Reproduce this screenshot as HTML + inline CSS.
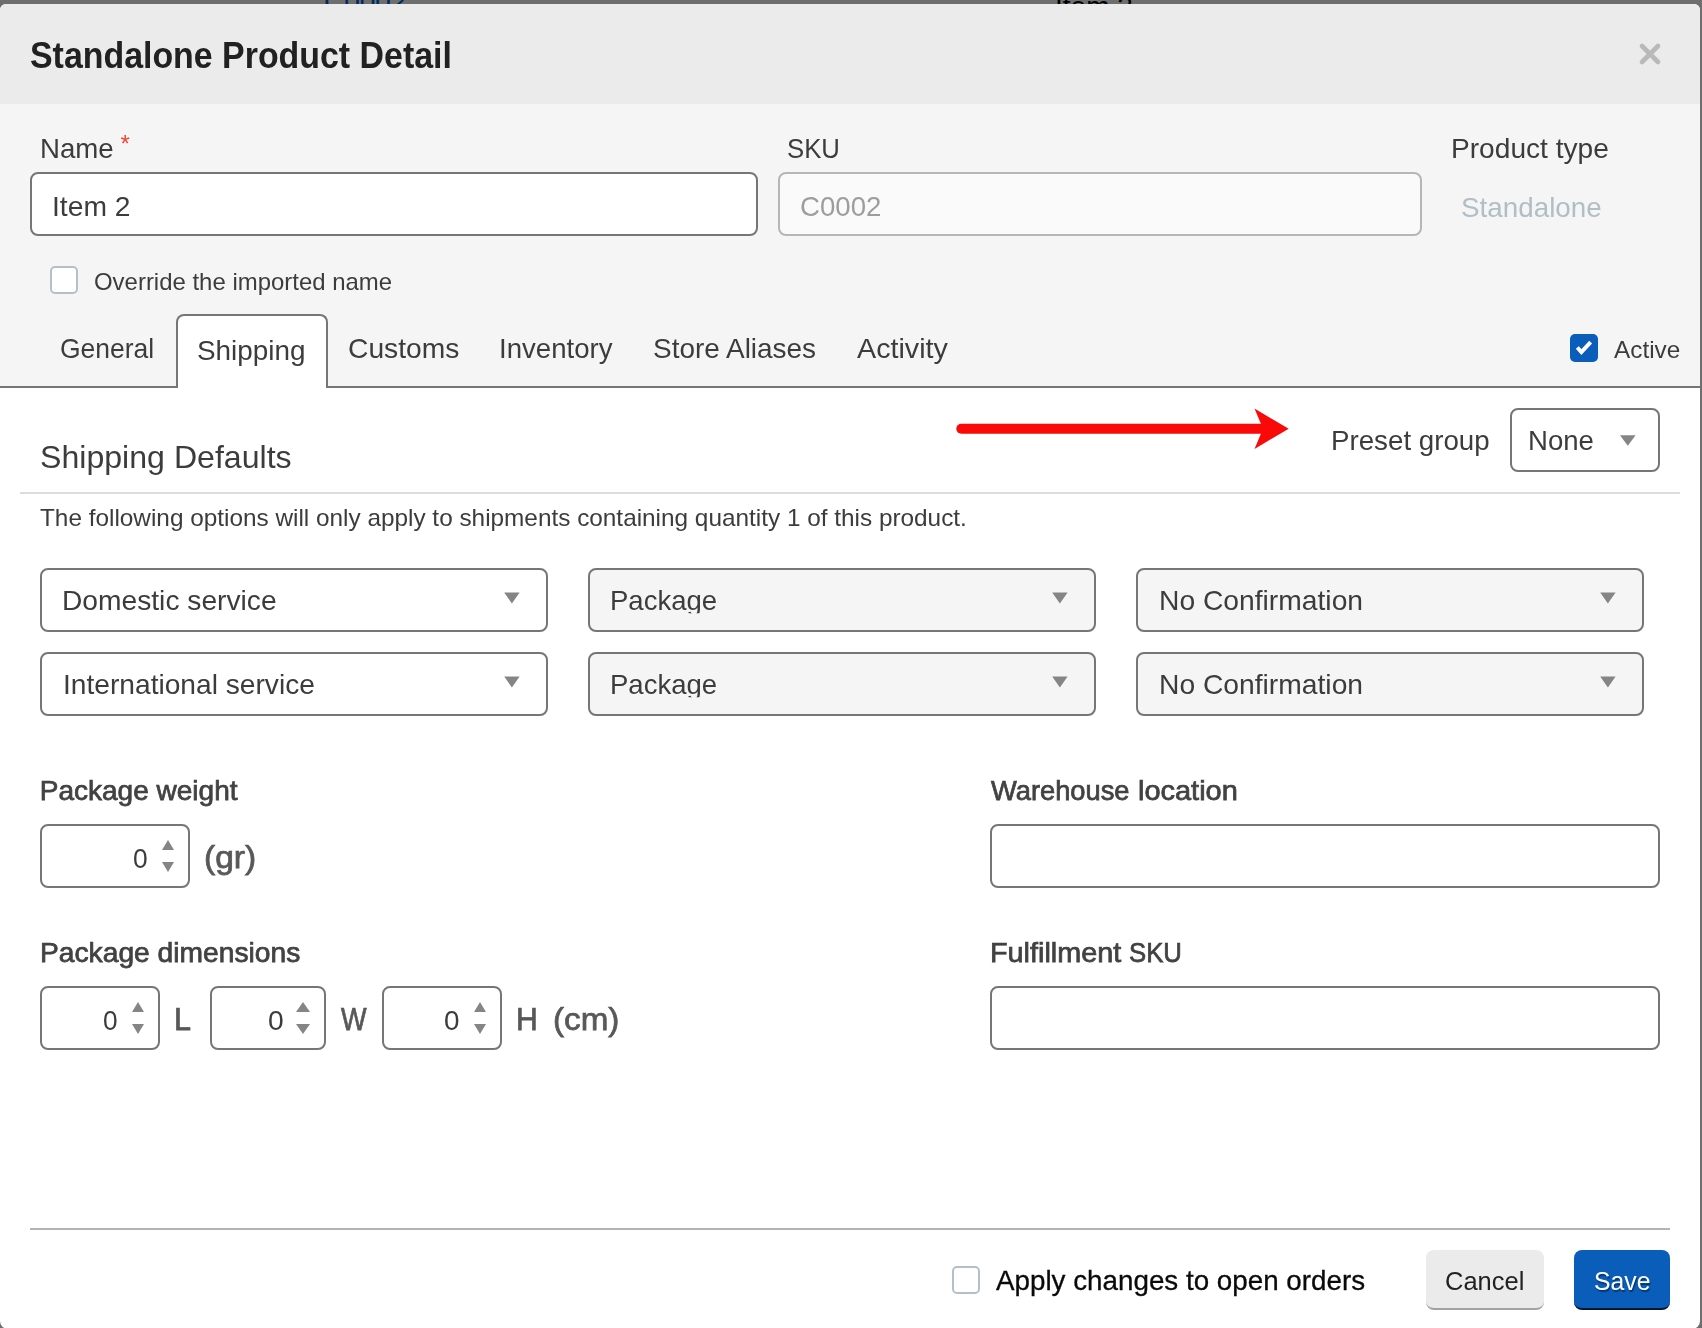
<!DOCTYPE html>
<html lang="en">
<head>
<meta charset="utf-8">
<title>Standalone Product Detail</title>
<style>
*{box-sizing:border-box;margin:0;padding:0}
html,body{width:1702px;height:1328px;overflow:hidden;background:#6e6e6e;font-family:"Liberation Sans",sans-serif;color:#3c3c3c}
.abs,.t,.sel,.inp,.cb{position:absolute}
.t{white-space:nowrap;line-height:1;font-size:28px;transform-origin:0 50%}
.m{-webkit-text-stroke:0.75px currentColor;color:#424242}
.u{color:#585858}
#backdrop{left:0;top:0;width:1702px;height:4px;overflow:hidden;background:#6e6e6e}
#modal{left:0;top:4px;width:1700px;height:1324.6px;background:#fff;border-radius:6px 6px 8px 8px;overflow:hidden;will-change:transform}
#hdr{left:0;top:0;width:1700px;height:100px;background:#ebebeb}
#top{left:0;top:100px;width:1700px;height:284px;background:#f5f5f5}
#tabline{left:0;top:382px;width:1700px;height:2px;background:#767676}
.inp{border:2px solid #767676;border-radius:8px;background:#fff}
.sel{border:2px solid #767676;border-radius:8px;background:#fff;height:64px;width:508px}
.sel.g{background:#f5f5f5}
.cb{width:28px;height:28px;border:2px solid #b4c0c8;border-radius:5px;background:#fff}
.hr{position:absolute;height:2px}
</style>
</head>
<body>
<div id="backdrop" class="abs">
  <span class="t" style="left:324px;top:-12px;font-size:28px;color:#002a5c">C0002</span>
  <span class="t" style="left:1055px;top:-7px;font-size:28px;color:#000">Item 2</span>
</div>
<div id="modal" class="abs">
  <div id="hdr" class="abs"></div>
  <div id="top" class="abs"></div>
  <!-- header -->
  <h1 id="title" class="t" style="left:30px;top:34px;font-size:36px;font-weight:bold;color:#212121;transform:scaleX(0.9415)">Standalone Product Detail</h1>
  <svg id="closex" class="abs" style="left:1638px;top:38px" width="24" height="24" viewBox="0 0 24 24"><path d="M4 4 L20 20 M20 4 L4 20" stroke="#b9b9b9" stroke-width="4.6" stroke-linecap="round" fill="none"/></svg>

  <!-- top form -->
  <label id="lname" class="t" style="left:40.4px;top:131px;transform:scaleX(0.9872)">Name</label>
  <span id="star" class="t" style="left:120.5px;top:128px;font-size:24px;color:#f4432c">*</span>
  <div id="iname" class="inp" style="left:30px;top:168px;width:728px;height:64px"></div>
  <span id="vname" class="t" style="left:51.6px;top:189px;transform:scaleX(1.0085)">Item 2</span>

  <label id="lsku" class="t" style="left:786.8px;top:131px;transform:scaleX(0.9192)">SKU</label>
  <div id="isku" class="inp" style="left:778px;top:168px;width:644px;height:64px;border-color:#b6b6b6;background:#fafafa"></div>
  <span id="vsku" class="t" style="left:799.9px;top:189px;color:#9d9d9d;transform:scaleX(0.9863)">C0002</span>

  <label id="lptype" class="t" style="left:1450.5px;top:131px;transform:scaleX(1.0039)">Product type</label>
  <span id="vptype" class="t" style="left:1460.9px;top:190px;color:#b0bec5;transform:scaleX(0.9933)">Standalone</span>

  <div id="cb1" class="cb" style="left:50px;top:262px"></div>
  <label id="lover" class="t" style="left:93.9px;top:266px;font-size:24px;transform:scaleX(0.9975)">Override the imported name</label>

  <!-- tabs -->
  <div id="tabline" class="abs"></div>
  <div id="tabact" class="abs" style="left:176px;top:310px;width:152px;height:74px;background:#fff;border:2px solid #767676;border-bottom:0;border-radius:8px 8px 0 0"></div>
  <span id="tab1" class="t" style="left:60.4px;top:331px;transform:scaleX(0.9455)">General</span>
  <span id="tab2" class="t" style="left:197.2px;top:333px;transform:scaleX(0.9962)">Shipping</span>
  <span id="tab3" class="t" style="left:348px;top:331px;transform:scaleX(1.0078)">Customs</span>
  <span id="tab4" class="t" style="left:499.4px;top:331px;transform:scaleX(0.9851)">Inventory</span>
  <span id="tab5" class="t" style="left:653.2px;top:331px;transform:scaleX(0.998)">Store Aliases</span>
  <span id="tab6" class="t" style="left:857px;top:331px;transform:scaleX(1.0247)">Activity</span>

  <div id="cbact" class="abs" style="left:1570px;top:330px;width:28px;height:28px;border-radius:5px;background:#0a5eba"></div>
  <svg class="abs" style="left:1570px;top:330px" width="28" height="28" viewBox="0 0 28 28"><path d="M7.3 13.5 L11.4 18 L20.65 8.15" stroke="#fff" stroke-width="4" fill="none" stroke-linecap="butt" stroke-linejoin="miter"/></svg>
  <label id="lact" class="t" style="left:1614px;top:334px;font-size:24px;transform:scaleX(1.0139)">Active</label>

  <!-- body -->
  <h2 id="shipdef" class="t" style="left:39.7px;top:437px;font-size:32px;font-weight:normal;transform:scaleX(1.0033)">Shipping Defaults</h2>
  <svg id="arrow" class="abs" style="left:950px;top:400px" width="345" height="50" viewBox="0 0 345 50"><path d="M11.3 24.75 L315 24.75" stroke="#fa0909" stroke-width="10" stroke-linecap="round" fill="none"/><path d="M338.7 24.75 L304.5 4.6 L313 24.75 L304.5 44.9 Z" fill="#fa0909"/></svg>
  <label id="lpreset" class="t" style="left:1330.5px;top:423px;transform:scaleX(0.9896)">Preset group</label>
  <div id="spreset" class="sel" style="left:1510px;top:404px;width:150px"></div>
  <span id="vpreset" class="t" style="left:1527.8px;top:423px;transform:scaleX(0.9846)">None</span>

  <div class="hr" style="left:20px;top:488px;width:1660px;background:#dcdcdc"></div>
  <p id="note" class="t" style="left:40px;top:502px;font-size:24px;transform:scaleX(1.0142)">The following options will only apply to shipments containing quantity 1 of this product.</p>

  <div class="sel" style="left:40px;top:564px"></div>
  <span id="s11" class="t" style="left:61.8px;top:583px;transform:scaleX(1.0068)">Domestic service</span>
  <div class="sel g" style="left:588px;top:564px"></div>
  <span id="s12" class="t" style="left:609.8px;top:583px;transform:scaleX(0.9834);clip-path:inset(-5px 0 1.7px 0)">Package</span>
  <div class="sel g" style="left:1136px;top:564px"></div>
  <span id="s13" class="t" style="left:1158.5px;top:583px;transform:scaleX(1.0086)">No Confirmation</span>

  <div class="sel" style="left:40px;top:648px"></div>
  <span id="s21" class="t" style="left:62.5px;top:667px;transform:scaleX(1.0054)">International service</span>
  <div class="sel g" style="left:588px;top:648px"></div>
  <span id="s22" class="t" style="left:609.8px;top:667px;transform:scaleX(0.9834);clip-path:inset(-5px 0 1.7px 0)">Package</span>
  <div class="sel g" style="left:1136px;top:648px"></div>
  <span id="s23" class="t" style="left:1158.5px;top:667px;transform:scaleX(1.0086)">No Confirmation</span>

  <!-- weight -->
  <label id="lpw" class="t m" style="left:39.8px;top:773px;transform:scaleX(1)">Package weight</label>
  <div class="inp" style="left:40px;top:820px;width:150px;height:64px"></div>
  <span id="vw" class="t" style="left:132.5px;top:841px;transform:scaleX(0.941)">0</span>
  <span id="ugr" class="t m u" style="left:204px;top:837px;font-size:32px;transform:scaleX(1.0488)">(gr)</span>

  <label id="lpd" class="t m" style="left:39.5px;top:935px;transform:scaleX(1.0072)">Package dimensions</label>
  <div class="inp" style="left:40px;top:982px;width:120px;height:64px"></div>
  <span id="vl" class="t" style="left:103px;top:1003px;transform:scaleX(0.9366)">0</span>
  <span id="uL" class="t m u" style="left:173.5px;top:999px;font-size:32px;transform:scaleX(0.9569)">L</span>
  <div class="inp" style="left:210px;top:982px;width:116px;height:64px"></div>
  <span id="vw2" class="t" style="left:267.9px;top:1003px;transform:scaleX(1.008)">0</span>
  <span id="uW" class="t m u" style="left:340.5px;top:999px;font-size:32px;transform:scaleX(0.846)">W</span>
  <div class="inp" style="left:382px;top:982px;width:120px;height:64px"></div>
  <span id="vh" class="t" style="left:443.9px;top:1003px;transform:scaleX(0.9945)">0</span>
  <span id="uH" class="t m u" style="left:515.9px;top:999px;font-size:32px;transform:scaleX(0.941)">H</span>
  <span id="ucm" class="t m u" style="left:552.5px;top:999px;font-size:32px;transform:scaleX(1.0381)">(cm)</span>

  <label id="lwh" class="t m" style="left:990.9px;top:773px;transform:scaleX(0.9745)">Warehouse</label> <label id="lwh2" class="t m" style="left:1138px;top:773px;transform:scaleX(1.034)">location</label>
  <div class="inp" style="left:990px;top:820px;width:670px;height:64px"></div>
  <label id="lfs" class="t m" style="left:990px;top:935px;transform:scaleX(1.0286)">Fulfillment</label> <label id="lfs2" class="t m" style="left:1129px;top:935px;transform:scaleX(0.9193)">SKU</label>
  <div class="inp" style="left:990px;top:982px;width:670px;height:64px"></div>

  <svg id="tris" class="abs" style="left:0;top:0" width="1700" height="1324" viewBox="0 0 1700 1324" fill="#858585"><polygon points="1620,431.2 1635.6,431.2 1627.8,441.8"/><polygon points="504.2,588.5 519.6,588.5 511.9,599.5"/><polygon points="1052.2,588.5 1067.6,588.5 1059.9,599.5"/><polygon points="1600.2,588.5 1615.6,588.5 1607.9,599.5"/><polygon points="504.2,672.5 519.6,672.5 511.9,683.5"/><polygon points="1052.2,672.5 1067.6,672.5 1059.9,683.5"/><polygon points="1600.2,672.5 1615.6,672.5 1607.9,683.5"/><polygon points="162,846 174,846 168.0,836"/><polygon points="162,858 174,858 168.0,868"/><polygon points="132,1008 144,1008 138.0,998"/><polygon points="132,1020 144,1020 138.0,1030"/><polygon points="296,1008 310,1008 303,998"/><polygon points="296,1020 310,1020 303,1030"/><polygon points="474,1008 486,1008 480.0,998"/><polygon points="474,1020 486,1020 480.0,1030"/></svg>
  <!-- footer -->
  <div class="hr" style="left:30px;top:1224px;width:1640px;background:#b4b4b4"></div>
  <div id="cb2" class="cb" style="left:952px;top:1262px"></div>
  <label id="lapply" class="t" style="left:996px;top:1263px;color:#0a0a0a;-webkit-text-stroke:0.3px #0a0a0a;transform:scaleX(0.992)">Apply changes to open orders</label>
  <div id="bcancel" class="abs" style="left:1426px;top:1246px;width:118px;height:60px;background:#ebebeb;border-radius:8px;border-bottom:2px solid #a2a2a2"></div>
  <span id="tcancel" class="t" style="left:1444.7px;top:1264px;font-size:26px;color:#222;transform:scaleX(0.9797)">Cancel</span>
  <div id="bsave" class="abs" style="left:1574px;top:1246px;width:96px;height:60px;background:#0a5eba;border-radius:8px;border-bottom:2px solid #03182f"></div>
  <span id="tsave" class="t" style="left:1593.9px;top:1264px;font-size:26px;color:#fff;text-shadow:1px 1.5px 1px rgba(0,20,60,.55);transform:scaleX(0.9542)">Save</span>
</div>
</body>
</html>
